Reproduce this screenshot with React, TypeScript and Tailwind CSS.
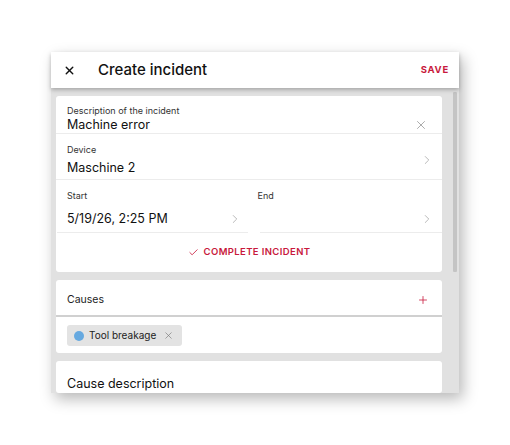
import { X, ChevronRight, Check, Plus } from "lucide-react";

const font = { fontFamily: "Inter, 'Noto Sans', sans-serif" };

export default function App() {
	return (
		<div className="w-[510px] h-[445px] bg-white pl-[51px] pt-[52px]" style={font}>
			<div className="w-[408px] h-[341px] flex flex-col shadow-[4px_6px_14px_rgba(0,0,0,0.28)]">
				{/* header */}
				<div className="h-[36px] bg-white flex items-center pl-[12px] pr-[10px] shadow-[0_2px_4px_rgba(0,0,0,0.25)] relative z-10">
					<X className="w-[13px] h-[13px] text-[#111]" strokeWidth={2.6} />
					<div className="ml-[22px] text-[15px] font-medium text-[#111] flex-1">Create incident</div>
					<div className="text-[9.5px] font-bold tracking-[0.08em] text-[#c8193c]">SAVE</div>
				</div>

				{/* body */}
				<div className="flex-1 bg-[#e1e1e1] flex overflow-hidden">
					<div className="flex-1 pl-[5px] pt-[8px] flex flex-col gap-[8px]">
						<div className="bg-white rounded-[3px] flex flex-col">
							<div className="h-[38px] pt-[9px] border-b border-[#ececec] flex items-start pl-[11px] pr-[14px]">
								<div className="flex-1">
									<div className="text-[9px] leading-[12px] text-[#333]">Description of the incident</div>
									<div className="text-[12.5px] leading-[16px] text-[#111]">Machine error</div>
								</div>
								<X className="w-[14px] h-[14px] text-[#999] mt-[13px]" strokeWidth={1.4} />
							</div>
							<div className="h-[46px] pt-[10px] border-b border-[#ececec] flex items-start pl-[11px] pr-[8px]">
								<div className="flex-1">
									<div className="text-[9px] leading-[12px] text-[#333]">Device</div>
									<div className="mt-[4px] text-[12.5px] leading-[16px] text-[#111]">Maschine 2</div>
								</div>
								<ChevronRight className="w-[14px] h-[14px] text-[#aaa] mt-[9px]" strokeWidth={1.4} />
							</div>
							<div className="flex gap-[12px] h-[53px]">
								<div className="flex-1 pt-[10px] flex items-start pl-[10px] pr-[6px] border-b border-[#ececec] ml-[1px]">
									<div className="flex-1">
										<div className="text-[9px] leading-[12px] text-[#333]">Start</div>
										<div className="mt-[9px] text-[12.5px] leading-[16px] text-[#111]">5/19/26, 2:25 PM</div>
									</div>
									<ChevronRight className="w-[14px] h-[14px] text-[#aaa] mt-[22px]" strokeWidth={1.4} />
								</div>
								<div className="flex-1 pt-[10px] flex items-start pr-[8px] border-b border-[#ececec]">
									<div className="flex-1 -ml-[2px]">
										<div className="text-[9px] leading-[12px] text-[#333]">End</div>
									</div>
									<ChevronRight className="w-[14px] h-[14px] text-[#aaa] mt-[22px]" strokeWidth={1.4} />
								</div>
							</div>
							<div className="h-[39px] flex items-center justify-center gap-[5px] text-[#c8193c]">
								<Check className="w-[11px] h-[11px]" strokeWidth={1.8} />
								<span className="text-[9.5px] font-semibold tracking-[0.04em]">COMPLETE INCIDENT</span>
							</div>
						</div>

						<div className="bg-white rounded-[3px] flex flex-col pb-[7px]">
							<div className="h-[37px] pt-[4px] border-b-2 border-[#d0d0d0] flex items-center pl-[11px] pr-[13px]">
								<div className="flex-1 text-[10.5px] text-[#222]">Causes</div>
								<Plus className="w-[12px] h-[12px] text-[#c8193c]" strokeWidth={1.6} />
							</div>
							<div className="flex pl-[11px] pt-[8px]">
								<div className="flex items-center h-[21px] bg-[#e3e3e3] rounded-[3px] pl-[7px] pr-[8px]">
									<span className="w-[10px] h-[10px] rounded-full bg-[#66a9e0]" />
									<span className="ml-[5px] text-[10px] text-[#222]">Tool breakage</span>
									<X className="ml-[7px] w-[11px] h-[11px] text-[#777]" strokeWidth={1.4} />
								</div>
							</div>
						</div>

						<div className="bg-white rounded-[3px] h-[60px] pl-[11px] pt-[17px]">
							<div className="text-[12.5px] leading-[12px] text-[#111]">Cause description</div>
						</div>
					</div>
					<div className="w-[17px] pt-[4px] pl-[11px]">
						<div className="w-[4px] h-[180px] bg-[#c4c4c4] rounded-[1px]" />
					</div>
				</div>
			</div>
		</div>
	);
}
